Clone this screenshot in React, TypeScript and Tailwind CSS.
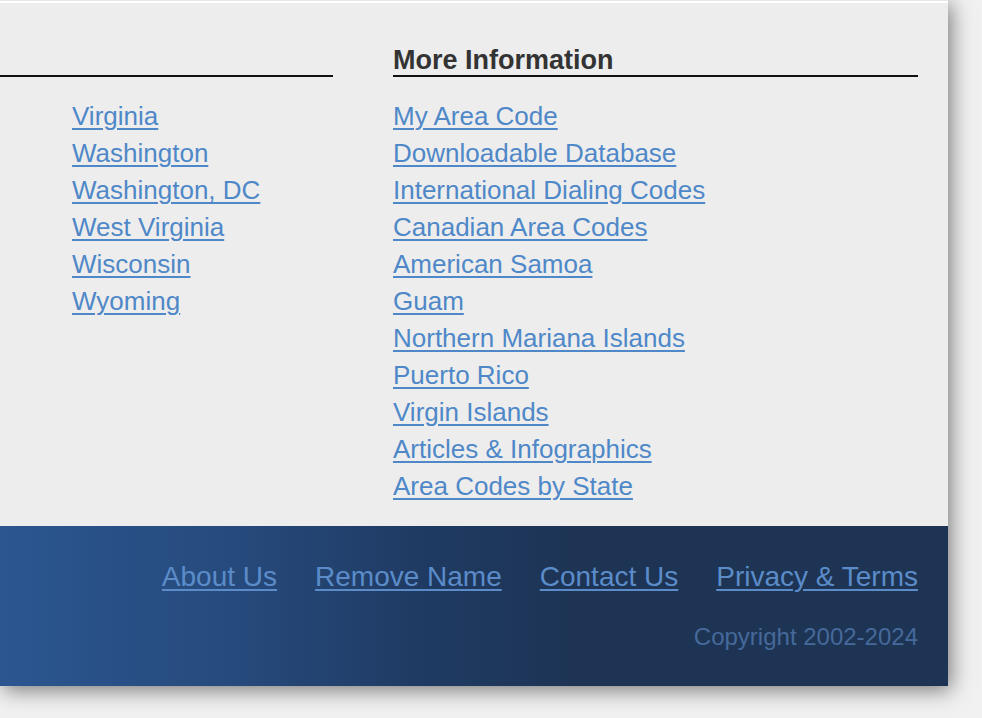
import React from 'react';

const states = ['Virginia', 'Washington', 'Washington, DC', 'West Virginia', 'Wisconsin', 'Wyoming'];

const moreInfo = [
  'My Area Code',
  'Downloadable Database',
  'International Dialing Codes',
  'Canadian Area Codes',
  'American Samoa',
  'Guam',
  'Northern Mariana Islands',
  'Puerto Rico',
  'Virgin Islands',
  'Articles & Infographics',
  'Area Codes by State',
];

const footerLinks = ['About Us', 'Remove Name', 'Contact Us', 'Privacy & Terms'];

const LinkList = ({ items }: { items: string[] }) => (
  <ul className="flex flex-col pt-[21px]">
    {items.map(item => (
      <li key={item} className="h-[37px] leading-[37px]">
        <a href="#" className="text-[26px] text-[#4f88c8] underline decoration-[1.5px] underline-offset-[3px]">
          {item}
        </a>
      </li>
    ))}
  </ul>
);

export default function App() {
  return (
    <div className="min-h-[718px] w-[982px] bg-[#f1f1f1] overflow-hidden font-['Liberation_Sans',Arial,sans-serif]">
      <div className="w-[948px] shadow-[3px_4px_20px_rgba(0,0,0,0.5)]">
        <div className="h-[3px] bg-white border-t border-[#e6e6e6]" />
        <div className="bg-[#ededed] pr-[30px] pb-[21px] pt-[38px]">
          <div className="grid grid-cols-[333px_525px] gap-x-[60px]">
            <div>
              <div className="h-[36px] border-b-2 border-[#111]" />
              <div className="pl-[72px]">
                <LinkList items={states} />
              </div>
            </div>
            <div>
              <h3 className="h-[36px] border-b-2 border-[#111] text-[27px] font-bold leading-[38px] text-[#333]">
                More Information
              </h3>
              <LinkList items={moreInfo} />
            </div>
          </div>
        </div>
        <footer className="h-[160px] bg-[linear-gradient(to_right,#2b5690_0%,#264a7c_25%,#1f3a62_45%,#1d3455_60%,#1d3455_100%)] pr-[30px] flex flex-col items-end">
          <nav className="flex gap-x-[38px] pt-[33px]">
            {footerLinks.map(l => (
              <a key={l} href="#" className="text-[28px] leading-[36px] text-[#5b8cc9] underline decoration-[1.5px] underline-offset-[3px]">
                {l}
              </a>
            ))}
          </nav>
          <p className="mt-[28px] text-[24px] leading-[28px] text-[#46699a]">Copyright 2002-2024</p>
        </footer>
      </div>
    </div>
  );
}
